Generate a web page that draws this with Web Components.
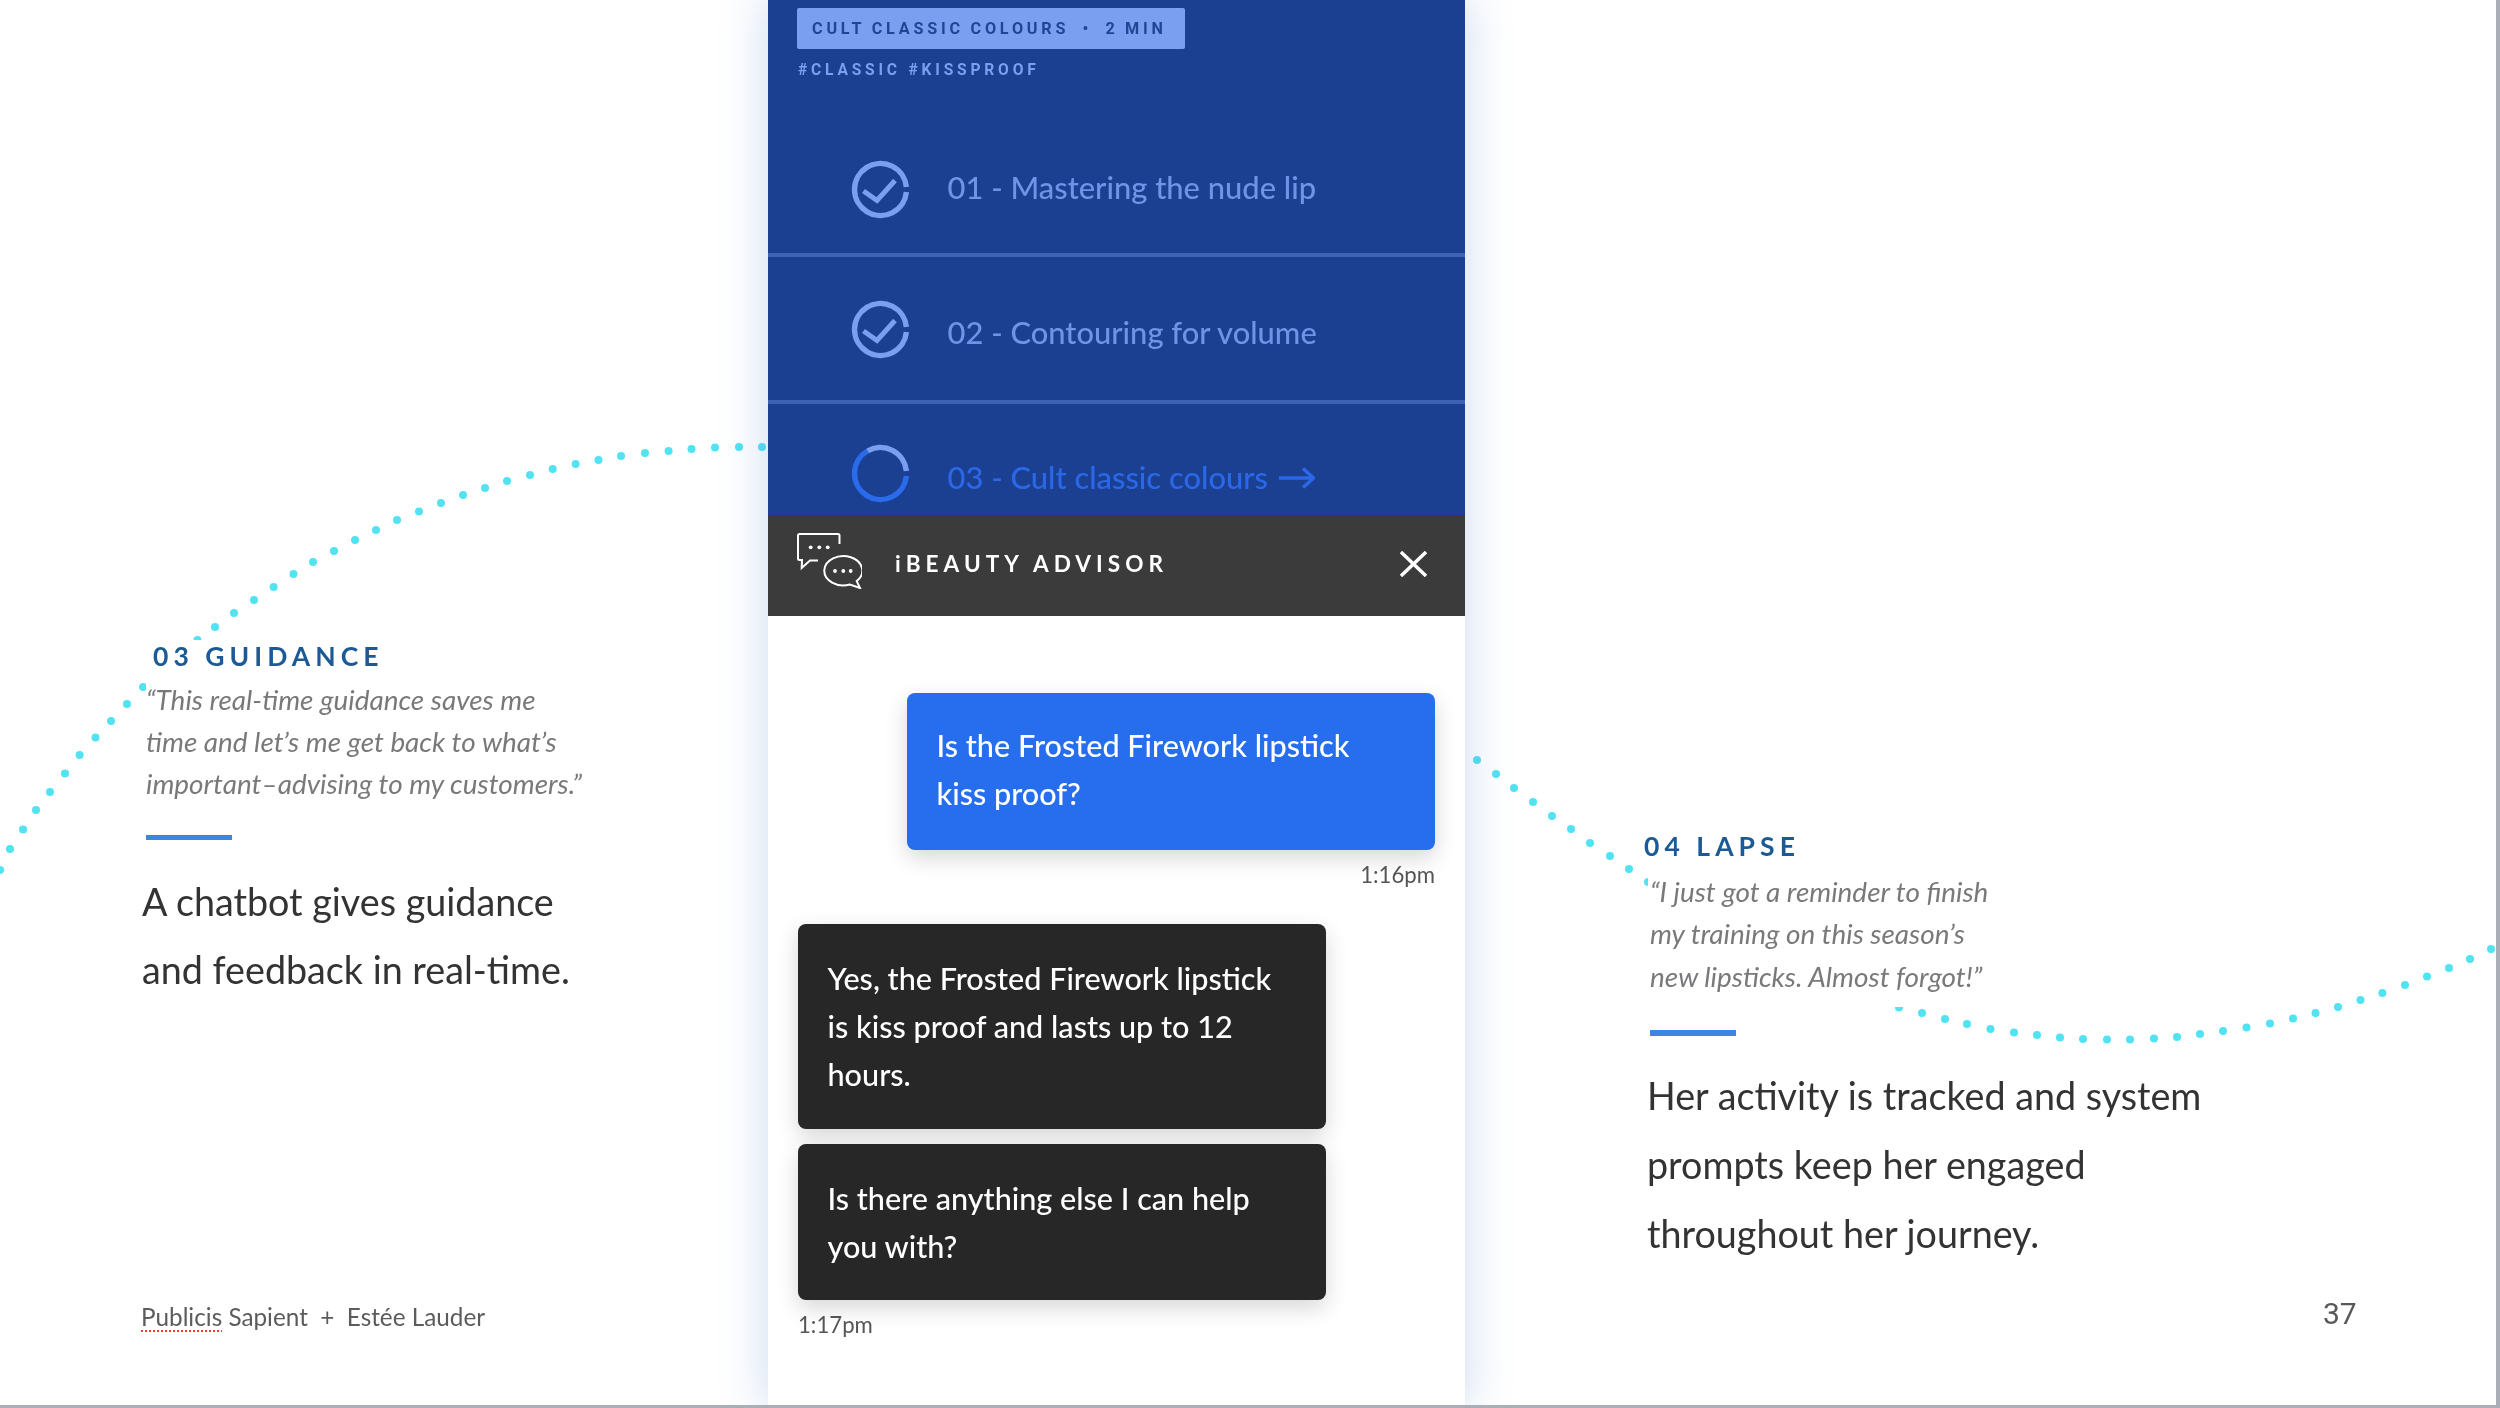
<!DOCTYPE html>
<html lang="en"><head><meta charset="utf-8"><title>Slide 37</title>
<style>html,body{margin:0;padding:0;background:#fff;overflow:hidden}body{font-family:Lato,"Noto Sans",sans-serif}</style>
</head><body>
<slide-page>
  <note-block slot="left" style="--top:640px;--left:146px;--head-left:7px;--quote-gap:5px;--quote-lh:42px;--quote-pb:0px;--rule-gap:30.5px;--body-gap:27.5px;--body-left:-4px;--quote-left:0px">
    <span slot="head">03 GUIDANCE</span>
    <span slot="quote">“This real-time guidance saves me<br>time and let’s me get back to what’s<br>important–advising to my customers.”</span>
    <span slot="body">A chatbot gives guidance<br>and feedback in real-time.</span>
  </note-block>
  <slide-footer slot="left"><span class="x">Publicis</span> Sapient&nbsp; +&nbsp; Estée Lauder</slide-footer>

  <phone-panel slot="center"></phone-panel>

  <note-block slot="right" style="--top:830px;--left:0px;--head-left:-4px;--quote-gap:7px;--quote-lh:42.3px;--quote-pb:10.6px;--rule-gap:23px;--body-gap:26px;--body-left:-1px;--quote-left:2px">
    <span slot="head">04 LAPSE</span>
    <span slot="quote">“I just got a reminder to finish<br>my training on this season’s<br>new lipsticks. Almost forgot!”</span>
    <span slot="body">Her activity is tracked and system<br>prompts keep her engaged<br>throughout her journey.</span>
  </note-block>
  <page-number slot="right">37</page-number>
</slide-page>

<script>
class DotCurve extends HTMLElement{
  constructor(){super();
    const L=[[762,447],[739,447],[715,447.5],[691.5,449],[668.6,451],[645,453],[621,456],[598.5,460],[575.6,464],[552.7,469],[530,475],[507,481],[485,488],[463,495],[441,503],[419,511.5],[397,520],[376,530],[355,540],[334,551],[313,562],[293.5,574],[273.6,587],[254,600],[234,613],[215,627],[197.5,640],[143,687],[127,704],[111,721],[95.5,737.6],[79.6,755],[65,773.6],[50,792],[36,810],[23,829.5],[10,849],[0,870]];
    const R=[[1477,760],[1496,774],[1514,788],[1533,802],[1552,816],[1571,829],[1590,843],[1610,856],[1629,869],[1648,882],[1899,1007.5],[1922,1013],[1945,1019],[1967,1024],[1990.5,1029],[2014,1032.5],[2037,1035],[2060,1037.5],[2083,1039],[2107,1039.6],[2130,1039.6],[2154,1038.6],[2177,1037],[2200,1034],[2223,1031],[2246.5,1027.5],[2270,1023.6],[2293,1018.6],[2315.5,1013],[2338,1007],[2360.5,1000],[2382.4,993],[2405,985],[2427,976.4],[2449,968],[2470,959],[2491,949]];
    const c=[...L,...R].map(p=>`<circle cx="${p[0]}" cy="${p[1]}" r="4"/>`).join('');
    this.attachShadow({mode:'open'}).innerHTML=`<style>:host{position:absolute;inset:0;display:block;pointer-events:none}svg{display:block}</style><svg width="2500" height="1408" viewBox="0 0 2500 1408" fill="#52e3f2">${c}</svg>`;
  }
}
customElements.define('dot-curve',DotCurve);

class SlidePage extends HTMLElement{
  constructor(){super();
    this.attachShadow({mode:'open'}).innerHTML=`<style>
    :host{display:block;position:relative;width:2500px;height:1408px;box-sizing:border-box;background:#fff;border-right:4px solid #a9aeb7;border-bottom:3px solid #a9aeb7;overflow:hidden;filter:blur(.4px)}
    .grid{position:relative;display:grid;grid-template-columns:768px 697px 1fr;height:100%}
    .col{position:relative;display:flex;flex-direction:column;min-width:0}
    .center{z-index:2}
    .right{padding-left:183px}
    </style>
    <dot-curve></dot-curve>
    <div class="grid">
      <div class="col left"><slot name="left"></slot></div>
      <div class="col center"><slot name="center"></slot></div>
      <div class="col right"><slot name="right"></slot></div>
    </div>`;
  }
}
customElements.define('slide-page',SlidePage);

class NoteBlock extends HTMLElement{
  constructor(){super();
    this.attachShadow({mode:'open'}).innerHTML=`<style>
    :host{display:block;margin-top:var(--top);margin-left:var(--left);white-space:nowrap}
    .cover{background:#fff;width:440px;padding-bottom:var(--quote-pb)}
    .head{font:700 26.5px/33px Lato,sans-serif;letter-spacing:5.05px;color:#1c5a96;margin-left:var(--head-left)}
    .quote{font:italic 400 27.9px/var(--quote-lh) Lato,sans-serif;color:#79797c;margin-top:var(--quote-gap);padding-left:var(--quote-left)}
    .rule{width:86px;height:5.5px;background:#3b86e0;margin-top:var(--rule-gap);margin-left:var(--quote-left)}
    .body{font:400 37.7px/68.8px Lato,sans-serif;color:#333335;margin-top:var(--body-gap);margin-left:var(--body-left)}
    </style>
    <div class="cover"><div class="head"><slot name="head"></slot></div><div class="quote"><slot name="quote"></slot></div></div>
    <div class="rule"></div>
    <div class="body"><slot name="body"></slot></div>`;
  }
}
customElements.define('note-block',NoteBlock);

class SlideFooter extends HTMLElement{
  constructor(){super();
    this.attachShadow({mode:'open'}).innerHTML=`<style>
    :host{display:block;margin-top:auto;margin-left:141px;margin-bottom:72px;font:400 24.3px/32px Lato,sans-serif;color:#5c5c5e;white-space:nowrap}
    ::slotted(.x){text-decoration:underline dotted #e8403c 2px;text-underline-offset:4px}
    </style><slot></slot>`;
  }
}
customElements.define('slide-footer',SlideFooter);

class PageNumber extends HTMLElement{
  constructor(){super();
    this.attachShadow({mode:'open'}).innerHTML=`<style>
    :host{display:block;margin-top:auto;margin-bottom:72.5px;margin-left:675px;font:400 30px/38px Roboto,sans-serif;color:#59595b}
    </style><slot></slot>`;
  }
}
customElements.define('page-number',PageNumber);

const CHECK=`<path d="M54.4 26A26 26 0 1 0 54.4 31" fill="none" stroke="#7a9ef0" stroke-width="5.4"/><path d="M11.5 30l13.5 9.5 18-20" fill="none" stroke="#7a9ef0" stroke-width="5"/>`;
const PROG=`<path d="M54.4 26A26 26 0 0 0 15.5 6" fill="none" stroke="#7a9ef0" stroke-width="5.4"/><path d="M15.5 6A26 26 0 1 0 54.4 31" fill="none" stroke="#2a6bec" stroke-width="5.4"/>`;

class LessonRow extends HTMLElement{
  constructor(){super();
    const cur=this.hasAttribute('current');
    this.attachShadow({mode:'open'}).innerHTML=`<style>
    :host{display:flex;flex:none;box-sizing:border-box;height:var(--h,147px);padding-left:84px;border-bottom:var(--b,4px) solid #3e62b4;align-items:flex-start}
    svg.i{flex:none;width:57px;height:57px;margin-top:var(--it);overflow:visible}
    .t{margin-left:38.5px;margin-top:var(--tt);font:500 30.9px/40px Lato,sans-serif;white-space:nowrap;color:${cur?'#2a68e8':'#6f93e6'};display:flex;align-items:center;gap:11px}
    svg.a{width:36px;height:22px;flex:none}
    </style>
    <svg class="i" viewBox="0 0 57 57">${cur?PROG:CHECK}</svg>
    <div class="t"><span><slot></slot></span>${cur?'<svg class="a" viewBox="0 0 36 22"><path d="M0 11H34M24 1.5L34.5 11 24 20.5" fill="none" stroke="#2a68e8" stroke-width="3.4"/></svg>':''}</div>`;
  }
}
customElements.define('lesson-row',LessonRow);

class ChatBubble extends HTMLElement{
  constructor(){super();
    this.attachShadow({mode:'open'}).innerHTML=`<style>
    :host{display:block;box-sizing:border-box;width:var(--w,528px);padding:var(--pt,30px) 20px var(--pb,31px) 29.5px;border-radius:8px;background:var(--bg,#272727);color:#fff;font:500 30.6px/48px Lato,sans-serif;box-shadow:0 8px 22px rgba(0,0,0,.16);white-space:nowrap}
    </style><slot></slot>`;
  }
}
customElements.define('chat-bubble',ChatBubble);

class ChatHeader extends HTMLElement{
  constructor(){super();
    this.attachShadow({mode:'open'}).innerHTML=`<style>
    :host{display:flex;flex:none;align-items:center;height:101px;background:#3b3b3b;padding:0 38px 0 29px;color:#fff}
    svg.c{width:65px;height:56px;flex:none;margin-top:-9px}
    .n{margin-left:33px;margin-bottom:3px;font:700 22.6px/30px Lato,sans-serif;letter-spacing:5.05px;white-space:nowrap;flex:1}
    svg.x{width:27px;height:26px;flex:none;margin-bottom:3px}
    </style>
    <svg class="c" viewBox="0 0 65 56" fill="none" stroke="#fff" stroke-width="2">
      <path d="M42.5 11V2.5Q42.5 1 41 1H2.5Q1 1 1 2.5V25.5Q1 27 2.5 27H5L4.7 35 13 27.5H21"/>
      <path d="M52.8 51.5A19 14.7 0 1 1 59.7 48.1L63 55Z"/>
      <g fill="#fff" stroke="none"><circle cx="13.7" cy="14.3" r="1.9"/><circle cx="22.3" cy="14.3" r="1.9"/><circle cx="30.7" cy="14.3" r="1.9"/><circle cx="38" cy="38" r="1.9"/><circle cx="46.3" cy="38" r="1.9"/><circle cx="53.7" cy="38" r="1.9"/></g>
    </svg>
    <div class="n"><slot></slot></div>
    <svg class="x" viewBox="0 0 27 26"><path d="M1 1L26 25M26 1L1 25" stroke="#fff" stroke-width="3.4" fill="none"/></svg>`;
  }
}
customElements.define('chat-header',ChatHeader);

class PhonePanel extends HTMLElement{
  constructor(){super();
    this.attachShadow({mode:'open'}).innerHTML=`<style>
    :host{display:flex;flex-direction:column;width:697px;height:100%;background:#fff;box-shadow:0 0 42px 4px rgba(70,120,200,.24)}
    .course{flex:none;height:515px;box-sizing:border-box;background:#1c4091;overflow:hidden;display:flex;flex-direction:column}
    .meta{flex:none;height:110px;box-sizing:border-box;padding:8px 0 0 29px}
    .badge{display:inline-block;height:41px;width:388px;box-sizing:border-box;padding-left:15px;background:#7a9ef0;border-radius:2px;color:#1f4593;font:700 16.2px/41px Roboto,sans-serif;letter-spacing:3.8px;word-spacing:-1.2px;white-space:pre}
    .tags{margin-top:9px;margin-left:1px;color:#7a9ef0;font:700 15.6px/24px Roboto,sans-serif;letter-spacing:3.8px;white-space:nowrap}
    .chat{flex:1;min-height:0;display:flex;flex-direction:column;padding:77px 30px 0 30px}
    .time{font:400 22.2px/30px Lato,sans-serif;color:#555}
    .r{text-align:right;margin-top:10px}
    .first{align-self:flex-end}
    .d1{margin-top:34px}
    .d2{margin-top:15px}
    .l{margin-top:10px}
    </style>
    <div class="course">
      <div class="meta">
        <div class="badge">CULT CLASSIC COLOURS  •  2 MIN</div>
        <div class="tags">#CLASSIC #KISSPROOF</div>
      </div>
      <lesson-row style="--h:147px;--it:51px;--tt:58px">01 - Mastering the nude lip</lesson-row>
      <lesson-row style="--h:147px;--it:44px;--tt:56px">02 - Contouring for volume</lesson-row>
      <lesson-row current style="--h:120px;--b:0px;--it:41px;--tt:54px">03 - Cult classic colours</lesson-row>
    </div>
    <chat-header>iBEAUTY ADVISOR</chat-header>
    <div class="chat">
      <chat-bubble class="first" style="--bg:#266eee;--pt:28.5px;--pb:32.5px">Is the Frosted Firework lipstick<br>kiss proof?</chat-bubble>
      <div class="time r">1:16pm</div>
      <chat-bubble class="d1" style="--pt:30.5px;--pb:30.5px">Yes, the Frosted Firework lipstick<br>is kiss proof and lasts up to 12<br>hours.</chat-bubble>
      <chat-bubble class="d2" style="--pt:31px;--pb:29px">Is there anything else I can help<br>you with?</chat-bubble>
      <div class="time l">1:17pm</div>
    </div>`;
  }
}
customElements.define('phone-panel',PhonePanel);
</script>
</body></html>
